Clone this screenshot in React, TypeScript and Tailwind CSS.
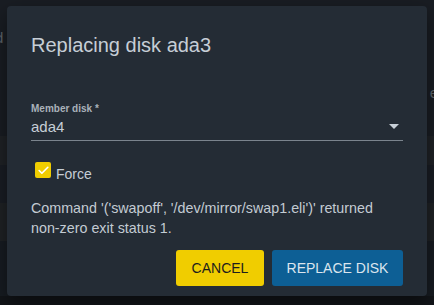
import { Check } from "lucide-react";

const font = { fontFamily: '"Liberation Sans", Arial, sans-serif' };

function Backdrop() {
  // page behind the modal, dimmed
  return (
    <div className="flex h-full flex-col">
      <div className="relative h-[136px] bg-[#191d23]">
        <span className="absolute left-[-5px] top-[27px] text-[15px] text-[#5d646b]">d</span>
        <span className="absolute right-[-4px] top-[82px] text-[15px] text-[#5d646b]">e</span>
      </div>
      <div className="h-[29px] bg-[#1f2226]" />
      <div className="h-[38px] bg-[#191d24]" />
      <div className="h-[38px] bg-[#1f2225]" />
      <div className="h-[55px] bg-[#171c22]" />
      <div className="flex-1 bg-[#121519]" />
    </div>
  );
}

export default function App() {
  return (
    <div className="relative h-[305px] w-[434px] overflow-hidden" style={font}>
      <Backdrop />
      <div className="absolute left-[7px] top-[6px] flex h-[290px] w-[420px] flex-col rounded-[4px] bg-[#242c35] px-6 pt-[27px] shadow-[0_8px_20px_rgba(0,0,0,0.45)]">
        <h2 className="text-[20px] leading-[24px] text-[#c6ced6]">Replacing disk ada3</h2>

        <div className="mt-[45px]">
          <label className="block text-[10px] font-bold leading-[13px] text-[#aab2ba]">
            Member disk *
          </label>
          <div className="mt-[3px] flex items-center justify-between border-b border-[#7b848d] pb-[4px]">
            <span className="text-[15px] leading-[18px] text-[#c6ced6]">ada4</span>
            <svg width="10" height="5" viewBox="0 0 10 5" className="mr-[4px] mb-[2px]">
              <path d="M0 0h10L5 5z" fill="#c8d0d8" />
            </svg>
          </div>
        </div>

        <div className="mt-[21px] flex items-start pl-[4px]">
          <span className="flex h-4 w-4 items-center justify-center rounded-[2px] bg-[#f0cd00]">
            <Check size={13} strokeWidth={3} className="text-white" />
          </span>
          <span className="ml-[5px] mt-[3px] text-[14px] leading-[18px] text-[#c6ced6]">Force</span>
        </div>

        <p className="mt-[15px] text-[14.3px] leading-[20px] text-[#c3cbd3]">
          Command '('swapoff', '/dev/mirror/swap1.eli')' returned{" "}
          <span className="whitespace-nowrap">non-zero</span> exit status 1.
        </p>

        <div className="mt-auto mb-[10px] flex justify-end gap-2">
          <button
            type="button"
            className="h-9 w-[88px] rounded-[3px] bg-[#f0cd00] text-[14px] text-[#1d1d1d]"
          >
            CANCEL
          </button>
          <button
            type="button"
            className="h-9 w-[131px] rounded-[3px] bg-[#0d5f95] text-[14px] text-[#dbe5ee]"
          >
            REPLACE DISK
          </button>
        </div>
      </div>
    </div>
  );
}
